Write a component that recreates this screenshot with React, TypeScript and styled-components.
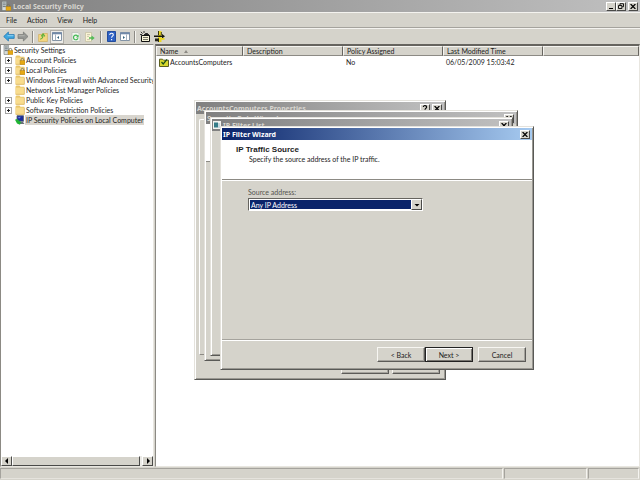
import React from 'react';
import styled, { createGlobalStyle, css } from 'styled-components';

const face = '#d5d3cb';
const shade = '#8c8a84';
const dark = '#4a4a48';
const ui = 'Lato, "Liberation Sans", Arial, sans-serif';
const uiHeading = '"Liberation Sans", Arial, sans-serif';
const uiTitle = '"Noto Sans", "Open Sans", sans-serif';

const GlobalStyle = createGlobalStyle`
  * { box-sizing: border-box; }
  html, body { margin: 0; padding: 0; }
  body { font: 7px/10px ${ui}; color: #1c1c1c; background: ${face}; overflow: hidden; }
  button, select { font: inherit; color: inherit; margin: 0; padding: 0; border-radius: 0; }
  svg { display: block; flex: none; }
`;

const raised = css`
  background: ${face};
  border: 1px solid;
  border-color: #fff ${dark} ${dark} #fff;
`;

const Page = styled.div`
  position: relative;
  display: flex;
  flex-direction: column;
  height: 100vh;
  min-height: 0;
`;

const TitleBar = styled.header<{ $active?: boolean }>`
  display: flex;
  align-items: center;
  flex: none;
  gap: 2px;
  height: 12px;
  padding: 0 2px 0 1px;
  color: ${p => (p.$active ? '#fff' : '#d8d6d0')};
  background: ${p =>
    p.$active
      ? 'linear-gradient(90deg, #0a246a, #a6caf0)'
      : 'linear-gradient(90deg, #808080, #c0c0c0)'};
`;

const Title = styled.h1`
  flex: 1;
  margin: 0;
  font: bold 7px/11px ${uiTitle};
  white-space: nowrap;
`;

const CaptionButtons = styled.div<{ $gap?: number }>`
  display: flex;
  gap: ${p => p.$gap ?? 2}px;
`;

const CaptionButton = styled.button`
  ${raised}
  display: grid;
  place-items: center;
  width: 10px;
  height: 9px;
  color: #000;
`;

const MenuBar = styled.nav`
  display: flex;
  align-items: center;
  gap: 10px;
  flex: none;
  height: 16px;
  padding-left: 6px;
  border-top: 1px solid #f4f3ef;
  border-bottom: 1px solid #a5a39d;
`;

const MenuItem = styled.button`
  border: 0;
  background: none;
  line-height: 12px;
`;

const Toolbar = styled.div`
  display: flex;
  align-items: center;
  flex: none;
  height: 16px;
  padding-left: 2px;
  border-top: 1px solid #f4f3ef;
`;

const ToolButton = styled.button<{ $pressed?: boolean; $after?: number }>`
  display: grid;
  place-items: center;
  width: 14px;
  height: 14px;
  margin-right: ${p => p.$after ?? 0}px;
  border: 1px solid ${p => (p.$pressed ? '#b0aea8' : 'transparent')};
  background: ${p => (p.$pressed ? '#edece8' : 'none')};
`;

const ToolDivider = styled.span`
  width: 2px;
  height: 12px;
  margin: 0 2px;
  border-left: 1px solid ${shade};
  border-right: 1px solid #f5f4f0;
`;

const Workspace = styled.main`
  display: grid;
  grid-template-columns: 154px minmax(0, 1fr);
  column-gap: 1px;
  flex: 1;
  min-height: 0;
`;

const Pane = styled.section`
  display: flex;
  flex-direction: column;
  min-width: 0;
  overflow: hidden;
  background: #fff;
  border: 1px solid ${shade};
  border-right-color: #e8e6e0;
  border-bottom-color: #e8e6e0;
`;

const ListPane = styled(Pane)`
  border-top: 2px solid #66645f;
`;

const Tree = styled.ul`
  flex: 1;
  margin: 0;
  padding: 0;
  list-style: none;
  overflow: hidden;
`;

const TreeRow = styled.li<{ $root?: boolean }>`
  display: flex;
  align-items: center;
  height: 10px;
  padding-left: ${p => (p.$root ? 2 : 4)}px;
  white-space: nowrap;
`;

const Expander = styled.button`
  display: grid;
  place-items: center;
  width: 7px;
  height: 7px;
  margin-right: 3px;
  border: 1px solid #a3a3a3;
  background: #fff;
`;

const ExpanderGap = styled.span`
  width: 7px;
  margin-right: 3px;
`;

const TreeLabel = styled.span<{ $selected?: boolean }>`
  padding: 0 1px;
  line-height: 10px;
  background: ${p => (p.$selected ? '#d8d5ce' : 'none')};
`;

const ScrollBar = styled.div`
  display: flex;
  height: 10px;
  flex: none;
  background: #ecebe7;
`;

const ScrollButton = styled.button`
  ${raised}
  display: grid;
  place-items: center;
  width: 11px;
`;

const ScrollThumb = styled.div`
  ${raised}
  flex: 1;
  margin-right: 2px;
`;

const Table = styled.table`
  width: 100%;
  table-layout: fixed;
  border-collapse: separate;
  border-spacing: 0;
  text-align: left;
`;

const Col = styled.col<{ $w?: number }>`
  width: ${p => (p.$w ? `${p.$w}px` : 'auto')};
`;

const HeadCell = styled.th`
  height: 10px;
  padding: 0 3px;
  font-weight: normal;
  line-height: 8px;
  white-space: nowrap;
  background: ${face};
  border: 1px solid;
  border-color: #f5f4f0 #66645f ${shade} #f5f4f0;
`;

const Cell = styled.td`
  padding: 1px 3px 0;
  white-space: nowrap;
`;

const Inline = styled.span`
  display: flex;
  align-items: center;
  gap: 1px;
`;

const HeadLabel = styled.span`
  display: flex;
  align-items: center;
  gap: 6px;
`;

const StatusBar = styled.footer`
  display: grid;
  grid-template-columns: minmax(0, 1fr) 83px 51px;
  column-gap: 1px;
  flex: none;
  height: 13px;
  padding: 1px 1px 1px 0;
`;

const StatusCell = styled.div`
  border: 1px solid;
  border-color: #a5a39d #f5f4f0 #e5e3dd #a5a39d;
`;

const Window = styled.section<{ $x: number; $y: number; $w: number; $h: number }>`
  position: absolute;
  left: ${p => p.$x}px;
  top: ${p => p.$y}px;
  width: ${p => p.$w}px;
  height: ${p => p.$h}px;
  display: flex;
  flex-direction: column;
  padding: 1px;
  background: ${face};
  border: 1px solid;
  border-color: #e4e2dc #595956 #595956 #e4e2dc;
  box-shadow: inset 1px 1px #fff, inset -1px -1px #9a9892;
`;

const TabPanel = styled.div`
  flex: 1;
  margin: 5px 4px 4px 3px;
  border: 1px solid;
  border-color: #fff ${shade} ${shade} #fff;
  border-radius: 2px 2px 0 0;
`;

const ListPanel = styled.div`
  width: 40px;
  height: 38px;
  background: #fff;
  border-bottom: 1px solid ${shade};
`;

const HiddenActions = styled.div`
  display: flex;
  justify-content: flex-end;
  gap: 3px;
  padding: 0 4px 4px;
`;

const PushButton = styled.button<{ $default?: boolean }>`
  width: 48px;
  height: 15px;
  line-height: 12px;
  background: ${face};
  border: 1px solid;
  border-color: ${p => (p.$default ? '#222' : '#f7f6f2 #5c5b58 #5c5b58 #f7f6f2')};
  box-shadow: ${p =>
    p.$default ? 'inset 1px 1px #fff, inset -1px -1px #777570' : 'inset -1px -1px #a5a39d'};
`;

const WizardHead = styled.div`
  flex: none;
  height: 40px;
  padding: 5px 14px;
  background: #fff;
  border-bottom: 1px solid ${shade};
`;

const WizardTitle = styled.h2`
  margin: 0;
  font: bold 8px/10px ${uiHeading};
`;

const WizardHint = styled.p`
  margin: 0 0 0 13px;
  line-height: 9px;
`;

const WizardBody = styled.div`
  flex: 1;
  padding: 6px 26px;
  border-top: 1px solid #fff;
`;

const FieldLabel = styled.label`
  display: block;
  margin-bottom: 1px;
  color: #55534e;
`;

const Combo = styled.div`
  display: flex;
  width: 175px;
  height: 13px;
  background: #fff;
  border: 1px solid;
  border-color: #66645f #fff #fff #66645f;
`;

const ComboSelect = styled.select`
  appearance: none;
  flex: 1;
  margin: 1px 0 1px 1px;
  padding: 0 1px;
  border: 0;
  outline: 0;
  color: #fff;
  background: #0a246a;
`;

const ComboArrow = styled.span`
  ${raised}
  display: grid;
  place-items: center;
  width: 11px;
`;

const WizardActions = styled.div`
  display: flex;
  justify-content: flex-end;
  flex: none;
  padding: 7px 6px 6px;
  border-top: 1px solid #a5a39d;
  box-shadow: inset 0 1px #fff;
`;

const CancelSlot = styled.div`
  margin-left: 5px;
`;

const Cross = () => (
  <svg width="6" height="5" viewBox="0 0 6 5">
    <path d="M.6 0 5.4 5M5.4 0 .6 5" stroke="#000" strokeWidth="1.2" />
  </svg>
);

const Arrow = ({ dir }: { dir: 'left' | 'right' | 'down' }) => (
  <svg width="6" height="6" viewBox="0 0 6 6">
    <path
      d={dir === 'left' ? 'M4 0v6L1 3z' : dir === 'right' ? 'M2 0v6l3-3z' : 'M.5 2h5L3 4.6z'}
      fill="#000"
    />
  </svg>
);

const Plus = () => (
  <svg width="5" height="5" viewBox="0 0 5 5">
    <path d="M1 2.5h3M2.5 1v3" stroke="#222" />
  </svg>
);

const Lock = () => (
  <g>
    <path d="M6 6V4.8a1.4 1.4 0 0 1 2.8 0V6" fill="none" stroke="#77735d" strokeWidth=".9" />
    <rect x="5" y="5.6" width="5" height="4" fill="#e5a814" stroke="#a87916" strokeWidth=".4" />
  </g>
);

const Folder = ({ locked }: { locked?: boolean }) => (
  <svg width="10" height="10" viewBox="0 0 10 10">
    <path d="M.5 1.5 1.5.6h3l1 1.2h3.7v7.6H.5z" fill="#eac66a" />
    <path d="M.8 2.6h8.4v6.6H.8z" fill="#f8dc8e" />
    <path d="M.8 9.3h8.6V2.6" fill="none" stroke="#d1a84e" strokeWidth=".6" />
    {locked && <Lock />}
  </svg>
);

const ServerLock = () => (
  <svg width="10" height="10" viewBox="0 0 10 10">
    <path d="M1 .3h4.6v9.2H1z" fill="#d7dcda" stroke="#6f7775" strokeWidth=".6" />
    <path d="M1.8 2h3M1.8 3.8h3M1.8 5.6h3" stroke="#4e5c66" strokeWidth=".8" />
    <Lock />
  </svg>
);

const Monitor = () => (
  <svg width="10" height="10" viewBox="0 0 10 10">
    <path d="M2 .7h6.5v5.6H2z" fill="#1a2c9c" stroke="#59616c" strokeWidth=".8" />
    <path d="M3 7h5l1.5 2H4z" fill="#687078" />
    <path d="M0 4.8 2 4l4 3-1 2.8L2 8.4z" fill="#20b434" />
    <path d="m3 2 3-.3-2 2z" fill="#5c7ee0" />
  </svg>
);

const PolicyFolder = () => (
  <svg width="10" height="9" viewBox="0 0 10 9">
    <path d="M.5 1.2h3l1 1h5v6.3h-9z" fill="#d7d72c" stroke="#4b4e12" strokeWidth=".9" />
    <path d="m2.5 4 1.7 2L8 1.4" fill="none" stroke="#174c19" strokeWidth="1.2" />
  </svg>
);

const HArrow = ({ back }: { back?: boolean }) => (
  <svg width="12" height="11" viewBox="0 0 12 11">
    <path
      d={back ? 'M.7 5.5 5.4 1v2.6h5.8v3.8H5.4V10z' : 'M11 5.5 6.4 1v2.6H1v3.8h5.4V10z'}
      fill={back ? '#3ea7df' : '#969894'}
      stroke={back ? '#2071ad' : '#747672'}
      strokeWidth=".7"
    />
    <path d={back ? 'M4.5 4.7h6' : 'M1.6 4.7h6'} stroke={back ? '#a4dcf7' : '#bbbcb8'} strokeWidth=".8" />
  </svg>
);

const UpFolder = () => (
  <svg width="10" height="10" viewBox="0 0 10 10">
    <path d="M.6 2.5h3l.8-1h5v8H.6z" fill="#f3d680" stroke="#cfa850" strokeWidth=".6" />
    <path d="M2.2 7.2C4 6.8 5 5.6 5 3.6M3.2 4.4 5.1 2l1.8 2.4" fill="none" stroke="#5bb03c" strokeWidth="1.1" />
  </svg>
);

const PaneIcon = ({ right }: { right?: boolean }) => (
  <svg width="10" height="9" viewBox="0 0 10 9">
    <path d="M.5.5h9v8h-9z" fill="#fff" stroke="#8293a5" />
    <path d="M0 1.4h10" stroke="#7189a8" strokeWidth="1.8" />
    <path d={right ? 'M6.5 2.5v6' : 'M3.5 2.5v6'} stroke="#8fa0b0" strokeWidth=".8" />
    <path d={right ? 'm3 4 2 1.5L3 7z' : 'M7 4 5 5.5 7 7z'} fill="#35647f" />
  </svg>
);

const RefreshIcon = () => (
  <svg width="10" height="10" viewBox="0 0 10 10">
    <path d="M1 .5h6L9 2.7v6.8H1z" fill="#f2f5ee" stroke="#b9bdb7" strokeWidth=".7" />
    <path d="M7 6.2A2.3 2.3 0 1 1 6.6 4" fill="none" stroke="#45b957" strokeWidth="1.2" />
    <path d="M7.6 2.6v2.8H5z" fill="#45b957" />
  </svg>
);

const ExportIcon = () => (
  <svg width="10" height="10" viewBox="0 0 10 10">
    <path d="M.5.5h6v9h-6z" fill="#faf4d5" stroke="#c3bda0" strokeWidth=".7" />
    <path d="M2 2.6h3M2 4.4h2M2 7.6h3" stroke="#aaa68f" strokeWidth=".6" />
    <path d="M4 5.2h2.5V3.5L9.7 6 6.5 8.5V6.8H4z" fill="#53bb56" />
  </svg>
);

const HelpIcon = () => (
  <svg width="9" height="11" viewBox="0 0 9 11">
    <path d="M.5.5h8v10h-8z" fill="#2f62c4" stroke="#234c9c" />
    <path d="M2.8 4c0-2.4 3.5-2.1 3.5-.2 0 1.5-1.7 1.3-1.7 3M4.6 8v1.2" fill="none" stroke="#fff" strokeWidth="1.1" />
  </svg>
);

const NewPolicyIcon = () => (
  <svg width="11" height="11" viewBox="0 0 11 11">
    <path d="M1.5 4.5h8v6h-8z" fill="#f6f3d8" stroke="#111" />
    <path d="m3.5 4.5 2-2h2l2 2z" fill="#222" stroke="#111" strokeWidth=".8" />
    <path d="m.8.8 1.8 1.8M4 0v2M0 3.5h2" fill="none" stroke="#222" strokeWidth=".9" />
    <path d="M3 6.5h5M3 8.5h5" stroke="#55554a" strokeWidth=".8" />
  </svg>
);

const FilterActionsIcon = () => (
  <svg width="11" height="11" viewBox="0 0 11 11">
    <path d="M4 0h3.5v11H4z" fill="#ead823" />
    <path d="M4.5 0v4M7.3 1v3M4.5 7.5V11" stroke="#2a2810" strokeWidth=".9" />
    <path d="M0 4.5h8V3l3 2.2-3 2.2V6H0z" fill="#17170f" />
    <path d="M1 7.5h4v2.8H1z" fill="#26251a" />
    <path d="M6 7h4.5v1.8H6z" fill="#ead823" />
  </svg>
);

const ListWindowIcon = () => (
  <svg width="8" height="8" viewBox="0 0 8 8">
    <path d="M0 0h8v8H0z" fill="#f3f3ef" />
    <path d="M1 1.5h4v5H1z" fill="#357c88" />
    <path d="M5 2h2v5H5z" fill="#c9d9df" />
  </svg>
);

const HelpMark = () => (
  <svg width="6" height="7" viewBox="0 0 6 7">
    <path d="M1.3 2c0-2 3.4-1.8 3.4.1C4.7 3.3 3 3.1 3 4.7M3 5.6v1" fill="none" stroke="#000" strokeWidth="1.1" />
  </svg>
);

const CloseButton = () => (
  <CaptionButton aria-label="Close">
    <Cross />
  </CaptionButton>
);

const treeItems = [
  { label: 'Account Policies', expands: true, locked: true },
  { label: 'Local Policies', expands: true, locked: true },
  { label: 'Windows Firewall with Advanced Security', expands: true },
  { label: 'Network List Manager Policies' },
  { label: 'Public Key Policies', expands: true },
  { label: 'Software Restriction Policies', expands: true },
  { label: 'IP Security Policies on Local Computer', selected: true },
];

export default function App() {
  return (
    <Page>
      <GlobalStyle />
      <TitleBar>
        <ServerLock />
        <Title>Local Security Policy</Title>
        <CaptionButtons $gap={0}>
          <CaptionButton aria-label="Minimize">
            <svg width="6" height="5" viewBox="0 0 6 5"><path d="M1 4.5h4" stroke="#000" /></svg>
          </CaptionButton>
          <CaptionButton aria-label="Restore">
            <svg width="6" height="6" viewBox="0 0 6 6">
              <path d="M2 2V.7h3.5v3H4.2M.5 2.5h3.4v3H.5z" fill="none" stroke="#000" strokeWidth=".9" />
            </svg>
          </CaptionButton>
        </CaptionButtons>
        <CloseButton />
      </TitleBar>
      <MenuBar>
        {['File', 'Action', 'View', 'Help'].map(m => <MenuItem key={m}>{m}</MenuItem>)}
      </MenuBar>
      <Toolbar>
        <ToolButton aria-label="Back"><HArrow back /></ToolButton>
        <ToolButton aria-label="Forward"><HArrow /></ToolButton>
        <ToolDivider />
        <ToolButton aria-label="Up one level"><UpFolder /></ToolButton>
        <ToolButton aria-label="Show console tree" $pressed $after={5}><PaneIcon /></ToolButton>
        <ToolButton aria-label="Refresh"><RefreshIcon /></ToolButton>
        <ToolButton aria-label="Export list" $after={1}><ExportIcon /></ToolButton>
        <ToolDivider />
        <ToolButton aria-label="Help"><HelpIcon /></ToolButton>
        <ToolButton aria-label="Show action pane"><PaneIcon right /></ToolButton>
        <ToolDivider />
        <ToolButton aria-label="Create IP security policy"><NewPolicyIcon /></ToolButton>
        <ToolButton aria-label="Manage filter actions"><FilterActionsIcon /></ToolButton>
      </Toolbar>
      <Workspace>
        <Pane>
          <Tree>
            <TreeRow $root><ServerLock /><TreeLabel>Security Settings</TreeLabel></TreeRow>
            {treeItems.map(item => (
              <TreeRow key={item.label}>
                {item.expands ? (
                  <Expander aria-label={`Expand ${item.label}`}><Plus /></Expander>
                ) : (
                  <ExpanderGap />
                )}
                {item.selected ? <Monitor /> : <Folder locked={item.locked} />}
                <TreeLabel $selected={item.selected}>{item.label}</TreeLabel>
              </TreeRow>
            ))}
          </Tree>
          <ScrollBar>
            <ScrollButton aria-label="Scroll left"><Arrow dir="left" /></ScrollButton>
            <ScrollThumb />
            <ScrollButton aria-label="Scroll right"><Arrow dir="right" /></ScrollButton>
          </ScrollBar>
        </Pane>
        <ListPane>
          <Table>
            <colgroup><Col $w={87} /><Col $w={100} /><Col $w={100} /><Col $w={100} /><Col /></colgroup>
            <thead>
              <tr>
                <HeadCell>
                  <HeadLabel>
                    Name
                    <svg width="4" height="3" viewBox="0 0 4 3"><path d="M0 3 2 0l2 3z" fill="#8c8a84" /></svg>
                  </HeadLabel>
                </HeadCell>
                <HeadCell>Description</HeadCell>
                <HeadCell>Policy Assigned</HeadCell>
                <HeadCell>Last Modified Time</HeadCell>
                <HeadCell />
              </tr>
            </thead>
            <tbody>
              <tr>
                <Cell><Inline><PolicyFolder />AccountsComputers</Inline></Cell>
                <Cell />
                <Cell>No</Cell>
                <Cell>06/05/2009 15:03:42</Cell>
                <Cell />
              </tr>
            </tbody>
          </Table>
        </ListPane>
      </Workspace>
      <StatusBar><StatusCell /><StatusCell /><StatusCell /></StatusBar>

      <Window $x={194} $y={100} $w={252} $h={280}>
        <TitleBar>
          <Title>AccountsComputers Properties</Title>
          <CaptionButtons>
            <CaptionButton aria-label="Help"><HelpMark /></CaptionButton>
            <CloseButton />
          </CaptionButtons>
        </TitleBar>
        <TabPanel />
        <HiddenActions>
          <PushButton aria-label="OK" />
          <PushButton aria-label="Apply" />
        </HiddenActions>
      </Window>
      <Window $x={204} $y={110} $w={314} $h={251}>
        <TitleBar>
          <Title>Security Rule Wizard</Title>
          <CloseButton />
        </TitleBar>
        <ListPanel />
      </Window>
      <Window $x={210} $y={117} $w={303} $h={239}>
        <TitleBar>
          <ListWindowIcon />
          <Title>IP Filter List</Title>
          <CloseButton />
        </TitleBar>
      </Window>
      <Window $x={220} $y={126} $w={314} $h={244} role="dialog" aria-label="IP Filter Wizard">
        <TitleBar $active>
          <Title>IP Filter Wizard</Title>
          <CloseButton />
        </TitleBar>
        <WizardHead>
          <WizardTitle>IP Traffic Source</WizardTitle>
          <WizardHint>Specify the source address of the IP traffic.</WizardHint>
        </WizardHead>
        <WizardBody>
          <FieldLabel htmlFor="source">Source address:</FieldLabel>
          <Combo>
            <ComboSelect id="source"><option>Any IP Address</option></ComboSelect>
            <ComboArrow><Arrow dir="down" /></ComboArrow>
          </Combo>
        </WizardBody>
        <WizardActions>
          <PushButton>&lt; Back</PushButton>
          <PushButton $default>Next &gt;</PushButton>
          <CancelSlot><PushButton>Cancel</PushButton></CancelSlot>
        </WizardActions>
      </Window>
    </Page>
  );
}
